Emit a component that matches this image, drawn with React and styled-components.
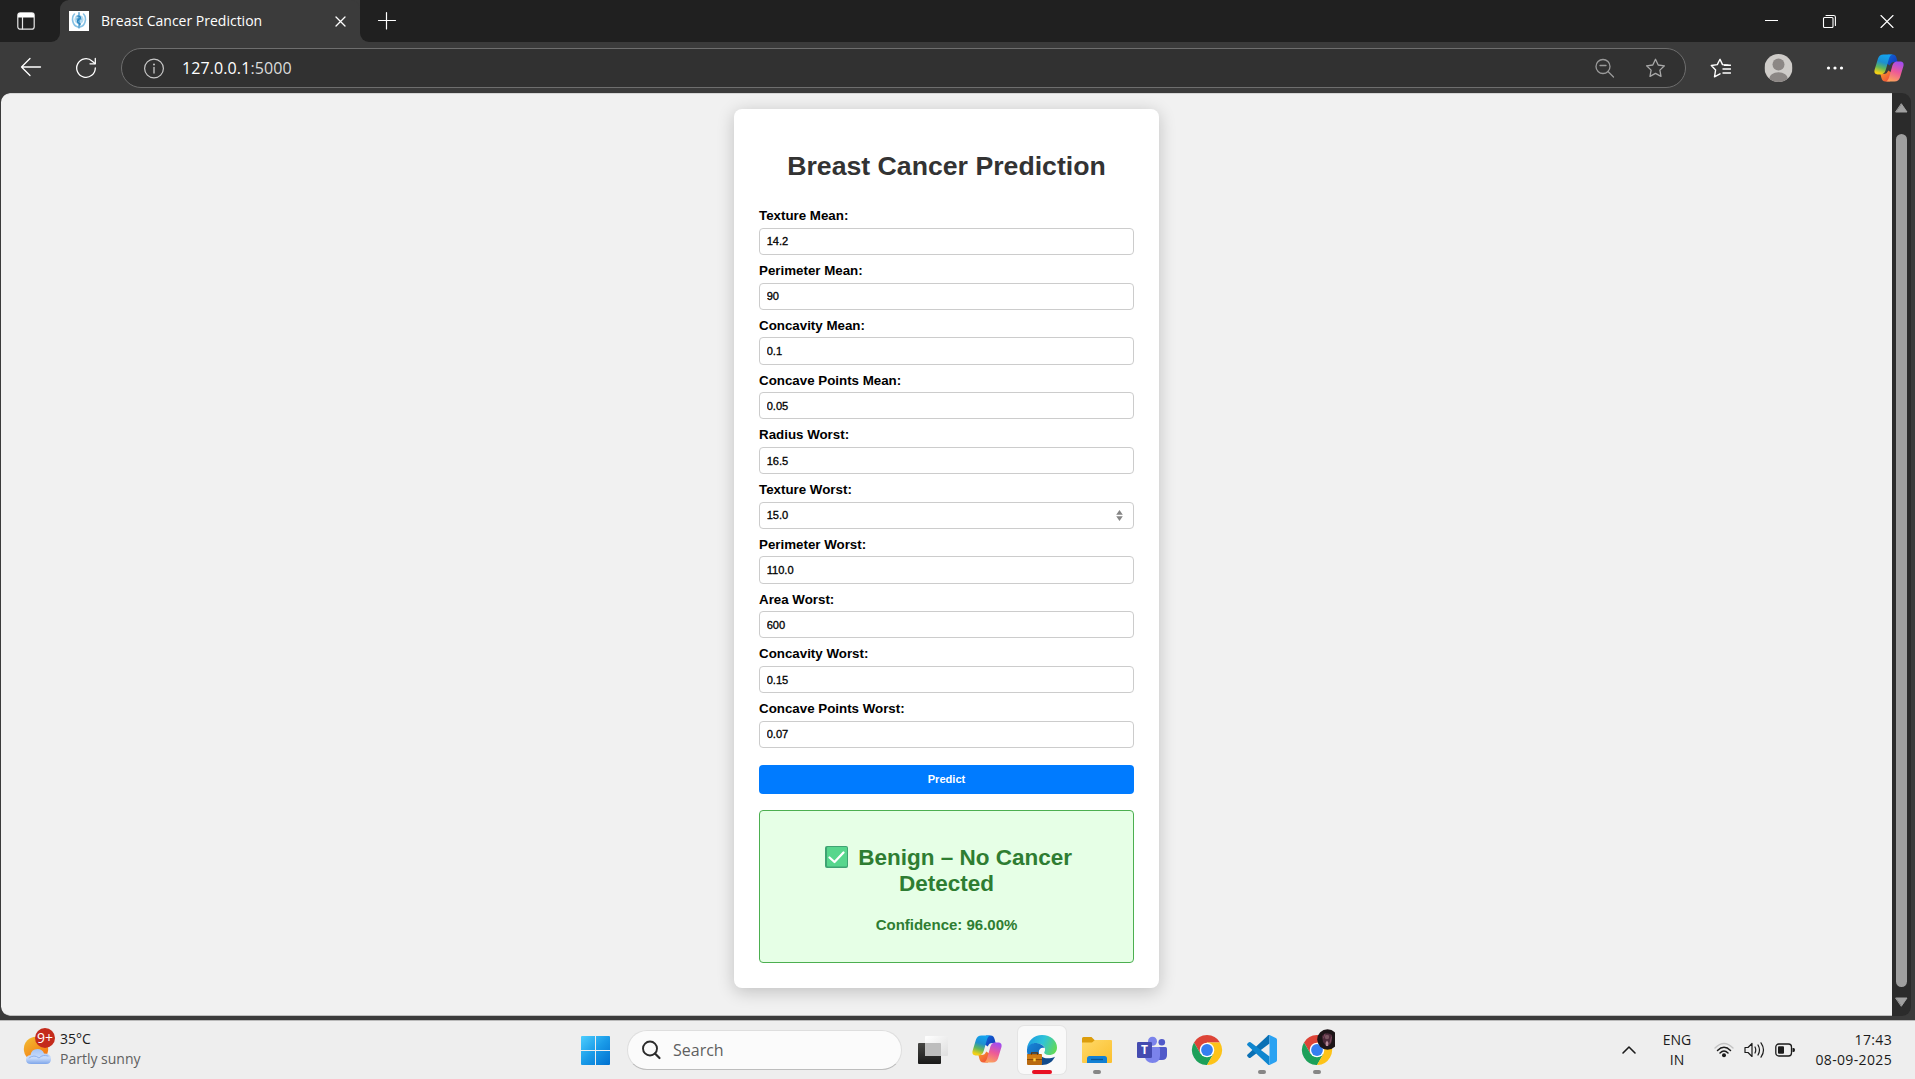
import React from "react";
import styled, { createGlobalStyle } from "styled-components";

const Global = createGlobalStyle`
  *, *::before, *::after { box-sizing: border-box; }
  html, body { margin: 0; padding: 0; overflow: hidden; }
`;

const ui = `"Open Sans", "Noto Sans", sans-serif`;
const arial = `"Liberation Sans", Arial, sans-serif`;

const Screen = styled.div`
  width: 1915px;
  height: 1079px;
  display: flex;
  flex-direction: column;
  background: #3b3b3b;
  font-family: ${ui};
  overflow: hidden;
`;

/* ---------- tab strip ---------- */
const TabStrip = styled.header`
  height: 42px;
  flex: none;
  display: flex;
  background: #3b3b3b;
`;
const TabActions = styled.div`
  width: 60px;
  padding: 12px 0 0 17px;
  background: #202020;
  border-bottom-right-radius: 9px;
  box-shadow: 8px -16px 0 0 #202020;
`;
const Tab = styled.div`
  position: relative;
  width: 300px;
  height: 42px;
  display: flex;
  align-items: center;
  padding: 0 12px 0 9px;
  background: #3b3b3b;
  border-radius: 9px 9px 0 0;
  color: #fff;
  font-size: 14px;
`;
const TabTitle = styled.span`
  flex: 1;
  margin-left: 12px;
  line-height: 20px;
  padding-bottom: 1px;
`;
const StripRest = styled.div`
  flex: 1;
  display: flex;
  background: #202020;
  border-bottom-left-radius: 9px;
  padding-left: 17px;
`;
const WindowButtons = styled.div`
  margin-left: auto;
  display: flex;
  gap: 44px;
  padding: 14px 21px 0 0;
`;

/* ---------- toolbar ---------- */
const Toolbar = styled.div`
  height: 51px;
  flex: none;
  display: flex;
  align-items: center;
  padding: 1px 11px 0 20px;
`;
const NavIcons = styled.div`
  display: flex;
  gap: 33px;
  width: 101px;
`;
const AddressBar = styled.div`
  width: 1565px;
  height: 40px;
  display: flex;
  align-items: center;
  padding: 0 19px 0 22px;
  border: 1px solid #6e6e6e;
  border-radius: 20px;
  background: #313131;
  color: #fff;
  font-size: 16px;
`;
const Url = styled.span`
  flex: 1;
  margin-left: 17px;
  line-height: 22px;
  padding-bottom: 1px;
  letter-spacing: 0.1px;
  & > em { font-style: normal; color: #dcdcdc; }
`;
const BarIcons = styled.div`
  display: flex;
  align-items: center;
  gap: 30px;
`;
const ToolIcons = styled.div`
  flex: 1;
  display: flex;
  align-items: center;
  justify-content: space-between;
  padding-left: 24px;
`;

/* ---------- viewport ---------- */
const Viewport = styled.div`
  height: 923px;
  flex: none;
  margin: 0 4px 4px 1px;
  display: flex;
  border-radius: 9px;
  overflow: hidden;
  background: #2b2b2b;
`;
const Page = styled.main`
  width: 1891px;
  display: flex;
  justify-content: center;
  align-items: flex-start;
  padding-top: 15px;
  background: #f1f1f1;
  border-bottom: 1px solid #bfbfbf;
  border-top: 1px solid #d6d6d6;
  border-bottom-left-radius: 9px;
  border-top-left-radius: 9px;
  font-family: ${arial};
`;
const Scrollbar = styled.div`
  flex: 1;
  display: flex;
  flex-direction: column;
  align-items: center;
  padding: 10px 0 8px;
`;
const Thumb = styled.div`
  width: 11px;
  height: 853px;
  margin: 21px 0 10px;
  border-radius: 6px;
  background: #9f9f9f;
`;

/* ---------- form card ---------- */
const Card = styled.section`
  width: 425px;
  height: 879px;
  display: flex;
  flex-direction: column;
  padding: 0 25px;
  background: #fff;
  border-radius: 8px;
  box-shadow: 0 3.3px 16.7px rgba(0, 0, 0, 0.2);
`;
const Title = styled.h1`
  margin: 41.9px 0 26.8px;
  color: #333;
  font-size: 26.67px;
  line-height: 30.6px;
  text-align: center;
`;
const Field = styled.label`
  display: flex;
  flex-direction: column;
  margin-bottom: 7.95px;
  color: #000;
  font-size: 13.33px;
  font-weight: bold;
  line-height: 15.33px;
`;
const InputBox = styled.span`
  height: 27.35px;
  margin-top: 4.17px;
  display: flex;
  align-items: center;
  padding: 0 10px 0 6.67px;
  border: 1px solid #ccc;
  border-radius: 4px;
  background: #fff;
`;
const Input = styled.input`
  flex: 1;
  min-width: 0;
  padding: 0;
  border: 0;
  outline: 0;
  background: transparent;
  color: #000;
  font: 11.11px ${arial};
  -webkit-text-stroke: 0.3px #000;
`;
const Predict = styled.button`
  height: 29px;
  flex: none;
  margin: 8.7px 0 16px;
  padding: 0;
  border: 0;
  border-radius: 4px;
  background: #007bff;
  color: #fff;
  font: bold 11.11px ${arial};
`;
const Result = styled.div`
  height: 153px;
  flex: none;
  padding: 34.7px 16px 0;
  border: 1px solid #4caf50;
  border-radius: 4px;
  background: #e6ffe6;
  color: #2e7d32;
  text-align: center;
`;
const Verdict = styled.h2`
  margin: 0 0 18.7px;
  font-size: 22.5px;
  line-height: 26px;
  & > svg { vertical-align: -3px; }
`;
const Confidence = styled.p`
  margin: 0;
  font-size: 15px;
  font-weight: bold;
  line-height: 17px;
`;

/* ---------- taskbar ---------- */
const Taskbar = styled.footer`
  height: 59px;
  flex: none;
  display: flex;
  border-top: 1px solid #b9b9b9;
  background: #eee;
`;
const Weather = styled.div`
  width: 571px;
  display: flex;
  padding: 7px 0 0 23px;
  color: #1b1b1b;
  font-size: 14px;
  line-height: 20px;
`;
const WeatherText = styled.div`
  display: flex;
  flex-direction: column;
  margin-left: 4px;
  padding-top: 1px;
`;
const Muted = styled.span`
  color: #606060;
`;
const Dock = styled.nav`
  display: flex;
  gap: 7px;
  padding-top: 5px;
`;
const Tile = styled.div`
  width: 48px;
  height: 48px;
  display: flex;
  flex-direction: column;
  align-items: center;
  justify-content: space-between;
  padding-top: 9px;
  border-radius: 6px;
  background: ${(p) => (p.$active ? "#f9f9f9" : "transparent")};
  box-shadow: ${(p) => (p.$active ? "0 0 0 1px #e4e4e4" : "none")};
`;
const Indicator = styled.i`
  width: ${(p) => (p.$active ? 20 : 8)}px;
  height: 4px;
  border-radius: 2px;
  background: ${(p) => (p.$active ? "#e81123" : "#868686")};
`;
const SearchBox = styled.div`
  width: 275px;
  height: 40px;
  margin: 4px -1px 0 1px;
  display: flex;
  align-items: center;
  padding-left: 14px;
  border: 1px solid #dedede;
  border-bottom-color: #bdbdbd;
  border-radius: 20px;
  background: #fbfbfb;
  color: #5f5f5f;
  font-size: 16px;
  & > span { margin-left: 11px; line-height: 22px; }
`;
const Tray = styled.div`
  margin-left: auto;
  display: flex;
  align-items: center;
  padding: 0 23px 0 0;
  color: #1b1b1b;
  font-size: 14px;
  line-height: 20px;
`;
const TrayText = styled.div`
  display: flex;
  flex-direction: column;
  text-align: ${(p) => p.$align};
  width: ${(p) => p.$w}px;
  margin-left: ${(p) => p.$gap}px;
  margin-top: -1px;
  letter-spacing: ${(p) => p.$ls || 0}px;
`;
const StatusIcons = styled.div`
  display: flex;
  align-items: center;
  gap: 10px;
  margin-left: 21px;
`;

const stroke = (c, w = 1.4) => ({ fill: "none", stroke: c, strokeWidth: w, strokeLinecap: "round", strokeLinejoin: "round" });

const Copilot = ({ id }) => (
  <svg width="30" height="28" viewBox="0 0 30 28">
    <defs>
      <linearGradient id={id + "a"} x1="0.6" y1="0" x2="0.3" y2="1">
        <stop offset="0" stopColor="#12a4f2" /><stop offset=".4" stopColor="#1d8fd0" />
        <stop offset=".68" stopColor="#62b75a" /><stop offset=".95" stopColor="#f2cf16" />
      </linearGradient>
      <linearGradient id={id + "b"} x1="0" y1="0" x2="1" y2="1">
        <stop offset="0" stopColor="#1268d8" /><stop offset="1" stopColor="#1034b5" />
      </linearGradient>
      <linearGradient id={id + "c"} x1="0.7" y1="0" x2="0.35" y2="1">
        <stop offset="0" stopColor="#a14cf0" /><stop offset=".5" stopColor="#ee5a97" /><stop offset="1" stopColor="#fca35c" />
      </linearGradient>
      <linearGradient id={id + "d"} x1="0" y1="0" x2="1" y2="1">
        <stop offset="0" stopColor="#f8a02a" /><stop offset="1" stopColor="#ee3f3c" />
      </linearGradient>
    </defs>
    <path d="M14 .5H18.6C21 .5 22 2 22.7 4.5L23.6 8H20.5C18 8 16.6 9 15.8 11.5L12 9Z" fill={`url(#${id}b)`} />
    <path d="M16 27.5H11.4C9 27.5 8 26 7.3 23.5L6.4 20H9.5C12 20 13.4 19 14.2 16.5L18 19Z" fill={`url(#${id}d)`} />
    <path d="M9.5 .5H18.8C16.6 .7 15.7 2.3 15 4.6L12 15C10.9 18.8 9.6 20.4 6.5 20.4H3.4C.6 20.4-.1 18 .7 15.4L4 4.6C5 1.8 6.5 .5 9.5 .5Z" fill={`url(#${id}a)`} />
    <path d="M20.5 27.5H11.2C13.4 27.3 14.3 25.7 15 23.4L18 13C19.1 9.2 20.4 7.6 23.5 7.6H26.6C29.4 7.6 30.1 10 29.3 12.6L26 23.4C25 26.2 23.5 27.5 20.5 27.5Z" fill={`url(#${id}c)`} />
  </svg>
);

const Chrome = ({ avatar }) => (
  <svg width="36" height="36" viewBox="-3 -6 36 36">
    <path d="M15 7.5H28A15 15 0 0 0 2 7.5L8.5 18.75L15 15Z" fill="#dd4437" />
    <path d="M15 7.5H28A15 15 0 0 0 2 7.5L8.5 18.75L15 15Z" fill="#1da05a" transform="rotate(-120 15 15)" />
    <path d="M15 7.5H28A15 15 0 0 0 2 7.5L8.5 18.75L15 15Z" fill="#fdc318" transform="rotate(120 15 15)" />
    <circle cx="15" cy="15" r="7.3" fill="#fff" />
    <circle cx="15" cy="15" r="5.9" fill="#357ff0" />
    {avatar && (
      <g>
        <circle cx="25.5" cy="4.5" r="10.3" fill="#1d1518" />
        <path d="M20 1Q24-4 30 0L30 6Q28 12 24 11L21 7Z" fill="#4d2a3a" />
        <path d="M21.500 3L23-1M29.500 2L28 8" {...stroke("#7c4a5e", 1)} />
        <circle cx="25" cy="2" r="2.2" fill="#7b5662" />
        <path d="M23.500 8L25 5.500L26.500 8L26 11H24Z" fill="#b58a98" />
      </g>
    )}
  </svg>
);

const Edge = () => (
  <svg width="30" height="30" viewBox="0 0 30 30">
    <defs>
      <linearGradient id="eg1" x1="0" y1=".3" x2="1" y2=".6">
        <stop offset="0" stopColor="#1b9de2" /><stop offset=".5" stopColor="#2fc3d8" /><stop offset="1" stopColor="#62d957" />
      </linearGradient>
      <linearGradient id="eg2" x1="0" y1="0" x2="1" y2="1">
        <stop offset="0" stopColor="#1a86d9" /><stop offset="1" stopColor="#0c5cab" />
      </linearGradient>
    </defs>
    <path d="M0 14C.5 6 7 0 15 0C24 0 30 6 30 12.500C30 17.500 26.500 20 22 20C18.500 20 17 18.600 17.200 17.300C18.800 15.500 18.500 11.500 14.500 9.500C9 7 2 9 0 14Z" fill="url(#eg1)" />
    <path d="M0 14C1.500 9.500 6 7.500 10.500 8.200C14 8.700 17 11 17.800 13C14.500 11.800 11.800 14 11.800 17C11.800 20 13 23 16 25V30C7 30-.8 24 0 14Z" fill="url(#eg2)" />
    <path d="M14 21C17 24 23 24 28 21.800C25.500 27 21 30 15 30Z" fill="#114a8b" />
    <rect x="0" y="19" width="15" height="11" rx="1" fill="#b8690f" />
    <path d="M4.500 19V17.800H10.500V19" {...stroke("#5f3206", 1.3)} />
    <path d="M0 24H15V24.800H0Z" fill="#7d4208" />
    <rect x="0" y="20" width="15" height="4" fill="#cf7d16" />
    <rect x="6.300" y="23.300" width="2.400" height="3" fill="#ffd23f" />
  </svg>
);

const Folder = () => (
  <svg width="30" height="30" viewBox="0 0 30 30">
    <defs>
      <linearGradient id="fo" x1="0" y1="0" x2="1" y2="1">
        <stop offset="0" stopColor="#ffd968" /><stop offset="1" stopColor="#fbbf2d" />
      </linearGradient>
    </defs>
    <path d="M0 3.500Q0 2 1.500 2H9.500L13 5.500H28V14H0Z" fill="#dc9d0c" />
    <path d="M0 7.500H10L13 5H29Q30 5 30 6V27Q30 28 29 28H1Q0 28 0 27Z" fill="url(#fo)" />
    <path d="M5 28V23.500Q5 21 7.500 21H22.500Q25 21 25 23.500V28Z" fill="#1280d4" />
    <path d="M9 24.500H21" stroke="#0a5694" strokeWidth="1.300" />
  </svg>
);

const Teams = () => (
  <svg width="30" height="30" viewBox="0 0 30 30">
    <circle cx="24.800" cy="7.300" r="3.300" fill="#5059c9" />
    <path d="M20 12H28.500Q30 12 30 13.500V20Q30 25 25 25H20Z" fill="#5059c9" />
    <circle cx="15.500" cy="6.300" r="4.500" fill="#7b83eb" />
    <path d="M8.500 12H21.500Q23 12 23 13.500V20.500Q23 28 15.500 28Q8.500 28 7.500 20.500Z" fill="#7b83eb" />
    <rect x="0" y="7" width="15" height="16" rx="1.300" fill="#444bb0" />
    <text x="7.500" y="19" textAnchor="middle" fontFamily="Open Sans" fontWeight="700" fontSize="12" fill="#fff">T</text>
  </svg>
);

const VsCode = () => (
  <svg width="30" height="30" viewBox="0 0 100 100">
    <path d="M75 0V28L12 76Q8 78 5 75L1 71Q-1 68 2 65L68 3Q71-1 75 0Z" fill="#0a70b4" />
    <path d="M75 100V72L12 24Q8 22 5 25L1 29Q-1 32 2 35L68 97Q71 101 75 100Z" fill="#0f86cf" />
    <path d="M71 1Q74-1 77 1L96 10Q100 12 100 16V84Q100 88 96 90L77 99Q74 101 71 99Q75 99 75 94V6Q75 1 71 1Z" fill="#2aa2f2" />
  </svg>
);

const Start = () => (
  <svg width="29" height="30" viewBox="0 0 29 30">
    <defs>
      <linearGradient id="st" gradientUnits="userSpaceOnUse" x1="0" y1="0" x2="29" y2="30">
        <stop offset="0" stopColor="#4fd0ff" /><stop offset=".5" stopColor="#1a9be8" /><stop offset="1" stopColor="#0070cf" />
      </linearGradient>
    </defs>
    <path d="M1 1H14V15H0V2Q0 1 1 1ZM15 1H28Q29 1 29 2V15H15ZM0 16H14V30H1Q0 30 0 29ZM15 16H29V29Q29 30 28 30H15Z" fill="url(#st)" />
  </svg>
);

const TaskView = () => (
  <svg width="30" height="30" viewBox="-1 0 30 30" overflow="visible">
    <defs>
      <linearGradient id="tv" x1="0" y1="0" x2="1" y2="1"><stop offset="0" stopColor="#fff" /><stop offset="1" stopColor="#dedede" /></linearGradient>
      <linearGradient id="tw" x1="0" y1="0" x2="0" y2="1"><stop offset="0" stopColor="#474744" /><stop offset="1" stopColor="#191919" /></linearGradient>
    </defs>
    <rect x="0" y="8" width="23" height="21" rx="1" fill="url(#tw)" />
    <rect x="7" y="1" width="23" height="20" rx="1" fill="url(#tv)" />
    <path d="M7 8H22Q23 8 23 9V21H7Z" fill="#bdbdbd" />
  </svg>
);

const Check = () => (
  <svg width="31" height="22" viewBox="0 0 31 22">
    <rect x="4" y="0" width="23" height="22" rx="2" fill="#3fa373" />
    <rect x="6" y="1" width="20" height="19.500" rx="1" fill="#57d68d" />
    <path d="M8.500 11.500L13.500 16L22.500 6.500" fill="none" stroke="#fff" strokeWidth="2.300" strokeLinecap="round" strokeLinejoin="round" />
  </svg>
);

const WeatherIcon = () => (
  <svg width="33" height="38" viewBox="0 0 33 38">
    <defs>
      <linearGradient id="su" x1=".1" y1="0" x2=".8" y2="1"><stop offset="0" stopColor="#f2bd32" /><stop offset="1" stopColor="#f4700f" /></linearGradient>
      <linearGradient id="cl" x1="0" y1="0" x2="0" y2="1"><stop offset="0" stopColor="#a7c5f5" /><stop offset=".6" stopColor="#c9dcfa" /><stop offset="1" stopColor="#7fa6ea" /></linearGradient>
    </defs>
    <circle cx="13" cy="21" r="12.200" fill="url(#su)" />
    <path d="M8 36Q3 36 3 31.500Q3 27.500 7.500 27Q8.500 21 14.500 21Q19.500 21 21 25.500Q28 25.500 28 31Q28 36 23 36Z" fill="url(#cl)" />
    <path d="M6 30Q11 26 16 30Q20 26 25 28" {...stroke("#8fb2ee", 1)} />
    <circle cx="22" cy="10" r="10" fill="#c42b1c" />
    <text x="22" y="14.800" textAnchor="middle" fontFamily="Open Sans" fontSize="14" fill="#fff">9+</text>
  </svg>
);

const star = "M10 1.300L12.700 7L18.900 7.800L14.400 12.100L15.500 18.400L10 15.400L4.500 18.400L5.600 12.100L1.100 7.800L7.300 7Z";

const fields = [
  ["Texture Mean:", "14.2"],
  ["Perimeter Mean:", "90"],
  ["Concavity Mean:", "0.1"],
  ["Concave Points Mean:", "0.05"],
  ["Radius Worst:", "16.5"],
  ["Texture Worst:", "15.0", true],
  ["Perimeter Worst:", "110.0"],
  ["Area Worst:", "600"],
  ["Concavity Worst:", "0.15"],
  ["Concave Points Worst:", "0.07"],
];

const dock = [
  [<TaskView />],
  [<Copilot id="dk" />],
  [<Edge />, "active"],
  [<Folder />, "open"],
  [<Teams />],
  [<Chrome />, "", true],
  [<VsCode />, "open"],
  [<Chrome avatar />, "open", true],
];

const ChromeTile = styled(Tile)`
  padding-top: 3px;
`;

function Browser() {
  return (
    <>
      <TabStrip>
        <TabActions>
          <svg width="18" height="18" viewBox="0 0 18 18">
            <rect x=".8" y=".8" width="16.400" height="16.400" rx="2.500" {...stroke("#e6e6e6", 1.2)} />
            <path d="M1 5.500V3Q1 1 3 1H15Q17 1 17 3V5.500Z" fill="#fff" />
            <path d="M5.500 5V17" {...stroke("#e6e6e6", 1.2)} />
          </svg>
        </TabActions>
        <Tab>
          <svg width="20" height="20" viewBox="0 0 20 20">
            <rect width="20" height="20" fill="#fff" />
            <path d="M5.500 3Q2.500 6 4 11Q5 15 9 16M14.500 3Q17.500 6 16 11Q15 15 11 16" {...stroke("#86c1e4", 1.6)} />
            <circle cx="10" cy="8.500" r="4.600" fill="#b4daef" />
            <path d="M10 1.500V17M8 5Q13 5 11 8Q7 9 9 12Q12 12 11 14M8 8H12" {...stroke("#2785c1", 1.1)} />
          </svg>
          <TabTitle>Breast Cancer Prediction</TabTitle>
          <svg width="16" height="16" viewBox="0 0 16 16"><path d="M4 4L13 13M13 4L4 13" {...stroke("#fff", 1.3)} /></svg>
        </Tab>
        <StripRest>
          <svg width="20" height="42" viewBox="0 0 20 42"><path d="M1.500 20.500H18.500M9.500 12.500V29" {...stroke("#fff", 1.2)} /></svg>
          <WindowButtons>
            <svg width="14" height="14" viewBox="0 0 14 14"><path d="M1 6.500H14" stroke="#fff" /></svg>
            <svg width="14" height="14" viewBox="0 0 14 14">
              <rect x="1.500" y="3.500" width="9.500" height="10" rx="1" {...stroke("#fff", 1.1)} />
              <path d="M4 1.500H11.500Q13.400 1.500 13.400 3V11.500" {...stroke("#fff", 1.1)} />
            </svg>
            <svg width="14" height="14" viewBox="0 0 14 14"><path d="M1 1.500L13 13.500M13 1.500L1 13.500" {...stroke("#fff", 1.1)} /></svg>
          </WindowButtons>
        </StripRest>
      </TabStrip>
      <Toolbar>
        <NavIcons>
          <svg width="22" height="20" viewBox="0 0 22 20"><path d="M1.500 10H20.500M10 1.500L1.500 10L10 18.500" {...stroke("#fff", 1.3)} /></svg>
          <svg width="22" height="22" viewBox="0 0 22 22">
            <path d="M20.300 11A9.300 9.300 0 1 1 17.300 4.200L20 6.500" {...stroke("#fff", 1.3)} />
            <path d="M20.300 1.500V6.800H15" {...stroke("#fff", 1.3)} />
          </svg>
        </NavIcons>
        <AddressBar>
          <svg width="21" height="21" viewBox="0 0 21 21">
            <circle cx="10" cy="10.500" r="9.400" {...stroke("#c9c9c9", 1.2)} />
            <path d="M10 9.500V15" {...stroke("#c9c9c9", 1.3)} />
            <circle cx="10" cy="6.500" r="1" fill="#c9c9c9" />
          </svg>
          <Url>127.0.0.1<em>:5000</em></Url>
          <BarIcons>
            <svg width="20" height="20" viewBox="0 0 20 20">
              <circle cx="8" cy="8.500" r="7" {...stroke("#9a9a9a", 1.3)} />
              <path d="M13 13.500L18.500 19M5 7.500H11" {...stroke("#9a9a9a", 1.3)} />
            </svg>
            <svg width="21" height="20" viewBox="0 0 20 20"><path d={star} {...stroke("#a8a8a8", 1.3)} /></svg>
          </BarIcons>
        </AddressBar>
        <ToolIcons>
          <svg width="21" height="21" viewBox="0 0 21 21">
            <path d="M18 7.200L12.500 6.600L10 1.300L7.300 6.600L1.300 7.500L5.600 12L4.500 18.800L10 15.800" {...stroke("#fff", 1.4)} />
            <path d="M14.500 7.300H20.500M13 11H20.500M13 15H20.500" {...stroke("#fff", 1.4)} />
          </svg>
          <svg width="30" height="28" viewBox="-1.500 0 30 28">
            <defs><clipPath id="av"><circle cx="14" cy="14" r="14" /></clipPath></defs>
            <g clipPath="url(#av)">
              <rect width="28" height="28" fill="#cfccc9" />
              <circle cx="14" cy="10.500" r="6" fill="#8c8785" />
              <ellipse cx="14" cy="25" rx="9.500" ry="6.800" fill="#8c8785" />
            </g>
          </svg>
          <svg width="18" height="6" viewBox="-2 0 18 6" overflow="visible">
            <circle cx="2.500" cy="3" r="1.600" fill="#fff" /><circle cx="9" cy="3" r="1.600" fill="#fff" /><circle cx="15.500" cy="3" r="1.600" fill="#fff" />
          </svg>
          <Copilot id="tb" />
        </ToolIcons>
      </Toolbar>
    </>
  );
}

export default function App() {
  return (
    <Screen>
      <Global />
      <Browser />
      <Viewport>
        <Page>
          <Card>
            <Title>Breast Cancer Prediction</Title>
            {fields.map(([name, value, spin]) => (
              <Field key={name}>
                {name}
                <InputBox>
                  <Input defaultValue={value} />
                  {spin && (
                    <svg width="7" height="11" viewBox="0 0 7 11">
                      <path d="M3.500 0L6.800 4.800H.2ZM3.500 11L6.800 6.200H.2Z" fill="#858585" />
                    </svg>
                  )}
                </InputBox>
              </Field>
            ))}
            <Predict>Predict</Predict>
            <Result>
              <Verdict><Check /> Benign – No Cancer<br />Detected</Verdict>
              <Confidence>Confidence: 96.00%</Confidence>
            </Result>
          </Card>
        </Page>
        <Scrollbar>
          <svg width="13" height="10" viewBox="0 0 13 10"><path d="M6.500 1L12 9H1Z" {...stroke("#a0a0a0", 1)} fill="#a0a0a0" /></svg>
          <Thumb />
          <svg width="13" height="10" viewBox="0 0 13 10"><path d="M6.500 9L12 1H1Z" {...stroke("#a0a0a0", 1)} fill="#a0a0a0" /></svg>
        </Scrollbar>
      </Viewport>
      <Taskbar>
        <Weather>
          <WeatherIcon />
          <WeatherText>
            <span>35°C</span>
            <Muted>Partly sunny</Muted>
          </WeatherText>
        </Weather>
        <Dock>
          <Tile><Start /></Tile>
          <SearchBox>
            <svg width="20" height="20" viewBox="0 0 20 20">
              <circle cx="8" cy="8.500" r="7" {...stroke("#2b2b2b", 1.9)} />
              <path d="M13 13.500L17.500 18" {...stroke("#2b2b2b", 2.2)} />
            </svg>
            <span>Search</span>
          </SearchBox>
          {dock.map(([icon, state, chrome], i) => {
            const Box = chrome ? ChromeTile : Tile;
            return (
              <Box key={i} $active={state === "active"}>
                {icon}
                {state && <Indicator $active={state === "active"} />}
              </Box>
            );
          })}
        </Dock>
        <Tray>
          <svg width="16" height="10" viewBox="0 0 16 10"><path d="M2 8L8 2L14 8" {...stroke("#1b1b1b", 1.6)} /></svg>
          <TrayText $align="center" $w={32} $gap={24}><span>ENG</span><span>IN</span></TrayText>
          <StatusIcons>
            <svg width="20" height="16" viewBox="0 0 20 16">
              <path d="M1 6Q10-3 19 6" {...stroke("#c4c4c4", 1.4)} />
              <path d="M3.500 8.500Q10 2 16.500 8.500M6 11Q10 7 14 11" {...stroke("#1b1b1b", 1.5)} />
              <circle cx="10" cy="13.300" r="2" fill="#1b1b1b" />
            </svg>
            <svg width="21" height="18" viewBox="0 0 21 18">
              <path d="M1 6.500H4L8 2.500V15.500L4 11.500H1Z" {...stroke("#1b1b1b", 1.2)} />
              <path d="M11 6Q12.500 9 11 12M14 4Q17 9 14 14M17 1.800Q22 9 17 16.200" {...stroke("#1b1b1b", 1.2)} />
            </svg>
            <svg width="20" height="14" viewBox="0 0 20 14">
              <rect x=".8" y="1" width="15.700" height="12" rx="3" {...stroke("#1b1b1b", 1.3)} />
              <rect x="3" y="3.200" width="6" height="7.600" rx="1" fill="#1b1b1b" />
              <path d="M17.500 5V9H18.500Q20 9 20 7Q20 5 18.500 5Z" fill="#1b1b1b" />
            </svg>
          </StatusIcons>
          <TrayText $align="right" $w={84} $gap={13} $ls={0.35}><span>17:43</span><span>08-09-2025</span></TrayText>
        </Tray>
      </Taskbar>
    </Screen>
  );
}
